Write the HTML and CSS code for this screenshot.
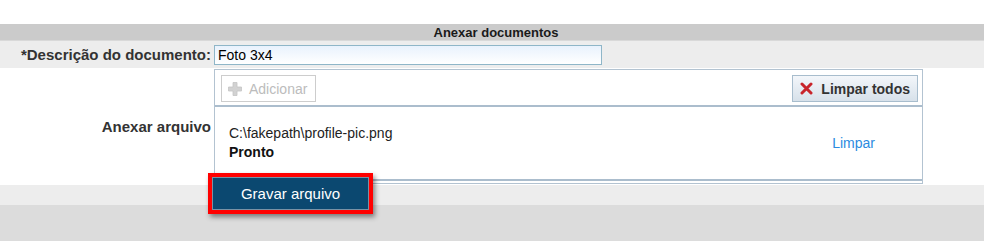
FILE: index.html
```html
<!DOCTYPE html>
<html lang="pt-BR">
<head>
  <meta charset="UTF-8" />
  <title>Anexar documentos</title>
  <link rel="stylesheet" href="styles.css">
</head>
<body>
  <div class="panel">
    <div class="panel-title">Anexar documentos</div>

    <div class="form-row shaded">
      <label class="form-label" for="descricao">*Descrição do documento:</label>
      <div class="form-field">
        <input id="descricao" class="text-input" type="text" value="Foto 3x4" />
      </div>
    </div>

    <div class="form-row upload-row">
      <div class="form-label">Anexar arquivo</div>
      <div class="form-field">
        <div class="uploader">
          <div class="uploader-toolbar">
            <button class="tool-btn disabled" disabled>
              <svg width="14" height="14" viewBox="0 0 14 14">
                <path d="M5 0.5h4v4.5h4.5v4h-4.5v4.5h-4v-4.5h-4.5v-4h4.5z" fill="#d2d2d2" stroke="#c4c4c4" stroke-width="0.8" stroke-linejoin="round"/>
              </svg>
              Adicionar
            </button>
            <button class="tool-btn clear-all">
              <svg width="13" height="13" viewBox="0 0 13 13">
                <path d="M2 2L11 11M11 2L2 11" stroke="#c8242b" stroke-width="3" stroke-linecap="round"/>
              </svg>
              Limpar todos
            </button>
          </div>
          <div class="file-list">
            <div class="file-item">
              <div class="file-info">
                <div class="file-name">C:\fakepath\profile-pic.png</div>
                <div class="file-status">Pronto</div>
              </div>
              <a class="file-clear" href="#">Limpar</a>
            </div>
          </div>
        </div>
      </div>
    </div>

    <div class="form-actions">
      <button class="btn-save">Gravar arquivo</button>
    </div>
  </div>
  <div class="page-footer"></div>
</body>
</html>
```

FILE: styles.css
```css
* {
  box-sizing: border-box;
}

html, body {
  margin: 0;
  padding: 0;
  height: 100%;
  font-family: 'Liberation Sans', Arial, sans-serif;
  font-size: 14px;
  color: #333;
  background: #dcdcdc;
}

.panel {
  background: #fff;
  padding-top: 24px;
}

.panel-title {
  height: 17px;
  line-height: 17px;
  background: #cbcbcb;
  border-bottom: 1px solid #d9d9d9;
  text-align: center;
  font-size: 13px;
  font-weight: bold;
  color: #1a1a1a;
  padding-left: 8px;
}

.form-row {
  display: flex;
  align-items: center;
}

.form-row.shaded {
  background: #ededed;
  height: 27px;
}

.form-label {
  width: 214px;
  flex: none;
  padding-right: 3px;
  text-align: right;
  font-size: 15px;
  font-weight: bold;
  color: #333;
}

.text-input {
  display: block;
  width: 388px;
  height: 20px;
  margin: 0;
  padding: 0 3px;
  border: 1px solid #8fb6c8;
  background: linear-gradient(#e9f2fd, #fff);
  font: 14px 'Liberation Sans', Arial, sans-serif;
  color: #000;
}

.upload-row {
  padding: 1px 0 1px;
}

.uploader {
  width: 709px;
  border: 1px solid #b3c3d1;
}

.uploader-toolbar {
  display: flex;
  justify-content: space-between;
  padding: 5px 4px 3px 6px;
  border-bottom: 2px solid #abbdcd;
}

.tool-btn {
  display: flex;
  align-items: center;
  gap: 7px;
  height: 27px;
  margin: 0;
  padding: 0 8px 0 6px;
  border: 1px solid #cdcdcd;
  background: #fff;
  font: 14px 'Liberation Sans', Arial, sans-serif;
  color: #bcbcbc;
}

.tool-btn.clear-all {
  gap: 8px;
  padding: 0 7px 0 7px;
  border-color: #a8bdcd;
  background: linear-gradient(#f3f6fa, #d7e1ea);
  font-weight: bold;
  color: #333;
}

.file-list {
  border-bottom: 2px solid #abbdcd;
  margin-bottom: 2px;
}

.file-item {
  display: flex;
  align-items: center;
  justify-content: space-between;
  height: 72px;
  padding: 0 47px 0 14px;
}

.file-info {
  line-height: 19px;
  color: #222;
}

.file-status {
  font-weight: bold;
  color: #111;
}

.file-clear {
  color: #2b8be0;
  text-decoration: none;
}

.form-actions {
  height: 20px;
  background: #ededed;
  padding-left: 208px;
}

.btn-save {
  position: relative;
  z-index: 1;
  width: 165px;
  height: 41px;
  margin-top: -12px;
  border: 4px solid #ff0000;
  background: #0b4870;
  box-shadow: inset 0 0 0 1px #7892a6, 2px 3px 5px rgba(0, 0, 0, 0.45);
  font: 15px 'Liberation Sans', Arial, sans-serif;
  color: #fff;
}

.page-footer {
  height: 36px;
  background: #dcdcdc;
}
```
